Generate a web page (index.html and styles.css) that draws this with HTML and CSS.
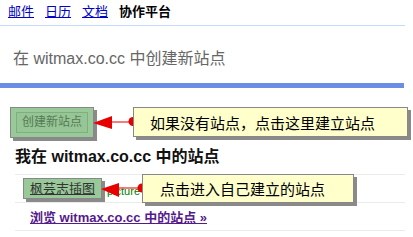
FILE: index.html
```html
<!DOCTYPE html>
<html lang="zh">
<head>
<meta charset="utf-8">
<link rel="stylesheet" href="styles.css">
</head>
<body>
<div class="page">
  <nav class="topnav">
    <a href="#">邮件</a>
    <a href="#">日历</a>
    <a href="#">文档</a>
    <b>协作平台</b>
  </nav>
  <div class="title">在 witmax.co.cc 中创建新站点</div>
  <div class="bluebar"></div>
  <div class="create-wrap">
    <div class="btn-create"><span class="btn-inner">创建新站点</span></div>
  </div>
  <h2 class="sites-h">我在 witmax.co.cc 中的站点</h2>
  <div class="rows">
    <div class="row">
      <div class="btn-site"><a href="#">枫芸志插图</a></div>
      <span class="site-url">picture</span>
    </div>
    <div class="row">
      <a class="browse" href="#">浏览 witmax.co.cc 中的站点 »</a>
    </div>
  </div>

  <svg class="arrows" width="413" height="237" viewBox="0 0 413 237">
    <line x1="110" y1="122" x2="133" y2="122" stroke="#f05050" stroke-width="1.5"/>
    <polygon points="93,123 112,116 112,129" fill="#e60000"/>
    <circle cx="133" cy="121.5" r="4.5" fill="#e60000"/>
    <line x1="117" y1="188" x2="142" y2="188" stroke="#f05050" stroke-width="1.5"/>
    <polygon points="101,189 119,183 119,197" fill="#e60000"/>
    <circle cx="142" cy="188" r="4.5" fill="#e60000"/>
  </svg>
  <div class="callout callout-1">如果没有站点，点击这里建立站点</div>
  <div class="callout callout-2">点击进入自己建立的站点</div>
</div>
</body>
</html>
```
FILE: styles.css
```css
html, body {
  margin: 0;
  padding: 0;
  background: #fff;
}
.page {
  position: relative;
  width: 413px;
  height: 237px;
  overflow: hidden;
  font-family: "Liberation Sans", "Noto Sans CJK SC", sans-serif;
  color: #000;
}
.topnav {
  display: flex;
  gap: 11px;
  padding-left: 8px;
  height: 25px;
  line-height: 24px;
  font-size: 13px;
  border-bottom: 1px solid #c3d9ff;
  width: 397px;
}
.topnav a {
  color: #0000cc;
  text-decoration: underline;
}
.topnav b {
  font-weight: bold;
  color: #000;
}
.title {
  padding: 23px 0 14px 13px;
  font-size: 16px;
  line-height: 20px;
  color: #666;
}
.bluebar {
  width: 404px;
  height: 5px;
  background: #6b8de6;
}
.create-wrap {
  padding: 19px 0 0 10px;
}
.btn-create {
  width: 82px;
  height: 29px;
  border: 1px solid #888;
  background: #99c899;
  box-shadow: 3px 3px 0 #8a8a8a;
  display: flex;
  align-items: center;
  justify-content: center;
  box-sizing: content-box;
}
.btn-inner {
  display: block;
  width: 70px;
  height: 19px;
  border: 1px solid #7fae7f;
  line-height: 19px;
  text-align: center;
  font-size: 12px;
  color: #557a55;
  background: #96c596;
}
.sites-h {
  margin: 9px 0 0 15px;
  font-size: 16px;
  line-height: 20px;
  font-weight: bold;
  color: #111;
}
.rows {
  margin: 7px 0 0 15px;
  width: 390px;
  border-top: 1px solid #ebebeb;
}
.row {
  height: 27px;
  border-bottom: 1px solid #ebebeb;
  display: flex;
  align-items: center;
}
.btn-site {
  margin-left: 8px;
  width: 77px;
  height: 19px;
  border: 1px solid #888;
  background: #99c899;
  box-shadow: 3px 3px 0 #8a8a8a;
  text-align: center;
  line-height: 19px;
  font-size: 13px;
}
.btn-site a {
  color: #333;
  text-decoration: underline;
}
.site-url {
  margin-left: 5px;
  margin-top: 4px;
  font-size: 11px;
  color: #008000;
}
.browse {
  margin-left: 15px;
  font-size: 13px;
  font-weight: bold;
  color: #551a8b;
  text-decoration: underline;
}
.arrows {
  position: absolute;
  left: 0;
  top: 0;
  pointer-events: none;
}
.callout {
  position: absolute;
  box-sizing: border-box;
  border: 1px solid #888;
  background: #ffffcc;
  box-shadow: 3px 3px 0 #8a8a8a;
  font-size: 15px;
  color: #000;
  display: flex;
  align-items: center;
}
.callout-1 {
  left: 133px;
  top: 107px;
  width: 275px;
  height: 30px;
  padding-left: 16px;
}
.callout-2 {
  left: 142px;
  top: 174px;
  width: 212px;
  height: 29px;
  padding-left: 17px;
}
```
